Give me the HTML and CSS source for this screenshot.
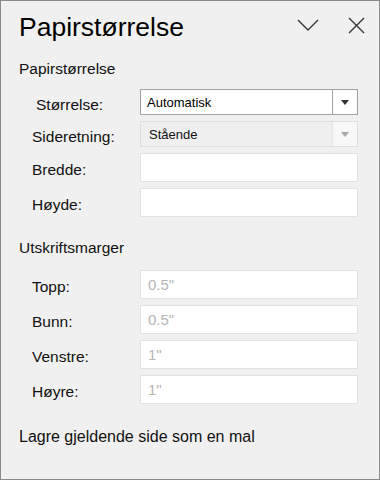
FILE: index.html
```html
<!DOCTYPE html>
<html lang="no">
<head>
<meta charset="utf-8">
<title>Papirstørrelse</title>
<link rel="stylesheet" href="styles.css">
</head>
<body>
<div class="panel">
  <div class="header">
    <h1 class="title">Papirstørrelse</h1>
    <svg class="icon" width="24" height="24" viewBox="0 0 24 24" aria-hidden="true"><path d="M2 7 L12 17 L22 7" fill="none" stroke="#333" stroke-width="1.4"/></svg>
    <svg class="icon close" width="24" height="24" viewBox="0 0 24 24" aria-hidden="true"><path d="M5 5 L20 20 M20 5 L5 20" fill="none" stroke="#333" stroke-width="1.4"/></svg>
  </div>

  <h2 class="section-title">Papirstørrelse</h2>
  <div class="form size-form">
    <label class="label l-size">Størrelse:</label>
    <div class="select">
      <span class="select-value">Automatisk</span>
      <span class="select-btn"><span class="arrow"></span></span>
    </div>
    <label class="label">Sideretning:</label>
    <div class="select disabled">
      <span class="select-value">Stående</span>
      <span class="select-btn"><span class="arrow"></span></span>
    </div>
    <label class="label">Bredde:</label>
    <input class="field" type="text">
    <label class="label">Høyde:</label>
    <input class="field" type="text">
  </div>

  <h2 class="section-title margins-title">Utskriftsmarger</h2>
  <div class="form">
    <label class="label">Topp:</label>
    <input class="field" type="text" placeholder="0.5&quot;">
    <label class="label">Bunn:</label>
    <input class="field" type="text" placeholder="0.5&quot;">
    <label class="label">Venstre:</label>
    <input class="field" type="text" placeholder="1&quot;">
    <label class="label">Høyre:</label>
    <input class="field" type="text" placeholder="1&quot;">
  </div>

  <p class="save-link">Lagre gjeldende side som en mal</p>
</div>
</body>
</html>
```

FILE: styles.css
```css
* { box-sizing: border-box; }
html, body { margin: 0; padding: 0; }
body {
  font-family: "Liberation Sans", Arial, sans-serif;
  color: #111;
  background: #f0f0f0;
}
.panel {
  width: 380px;
  height: 480px;
  border: 1px solid #8a8a8a;
  background: #f0f0f0;
  display: flex;
  flex-direction: column;
}
.header {
  display: flex;
  align-items: flex-start;
  padding: 11px 11px 0 18px;
}
.title {
  flex: 1;
  margin: 0;
  font-weight: normal;
  font-size: 26.5px;
  line-height: 30px;
  color: #000;
}
.icon { margin-top: 1px; flex: none; }
.close { margin-left: 24px; }

.section-title {
  margin: 17px 0 0 18px;
  font-weight: normal;
  font-size: 15.5px;
  line-height: 20px;
  color: #111;
}
.margins-title { margin-top: 21px; }

.form {
  display: grid;
  grid-template-columns: 139px 218px;
  row-gap: 6px;
  margin-top: 12px;
  align-items: center;
}
.size-form { margin-top: 10px; }

.label {
  padding-left: 31px;
  padding-top: 5px;
  font-size: 15.5px;
  color: #111;
}
.l-size { padding-left: 35px; }

.select {
  height: 26px;
  display: flex;
  border: 1px solid #a0a0a0;
  background: #fff;
}
.select-value {
  flex: 1;
  display: flex;
  align-items: center;
  padding-left: 6px;
  font-size: 13px;
  color: #000;
}
.select-btn {
  width: 25px;
  border-left: 1px solid #a0a0a0;
  display: flex;
  align-items: center;
  justify-content: center;
  background: #fff;
}
.arrow {
  width: 0;
  height: 0;
  border-left: 4.5px solid transparent;
  border-right: 4.5px solid transparent;
  border-top: 5px solid #333;
}
.select.disabled {
  border-color: #dedede;
  background: #efefef;
}
.select.disabled .select-value { padding-left: 8px; color: #111; }
.select.disabled .select-btn {
  border-left-color: #e6e6e6;
  background: #f8f8f8;
}
.select.disabled .arrow { border-top-color: #a8a8a8; }

.field {
  height: 29px;
  width: 218px;
  margin: 0;
  border: 1px solid #e2e2e2;
  background: #fff;
  padding: 0 0 0 7px;
  font-family: inherit;
  font-size: 15px;
  color: #111;
  outline: none;
}
.field::placeholder { color: #b5b5b5; opacity: 1; }

.save-link {
  margin: 23px 0 0 18px;
  font-size: 16px;
  line-height: 20px;
  color: #111;
}
```
